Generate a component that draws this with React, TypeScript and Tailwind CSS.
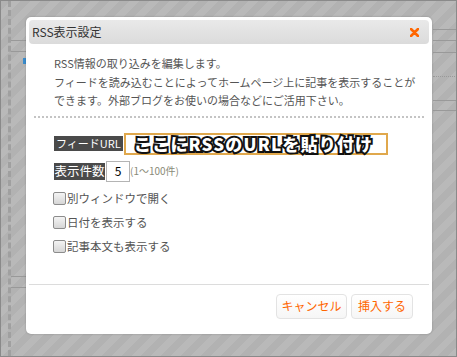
import React from 'react'

function CheckRow({ label }: { label: string }) {
  return (
    <div className="flex h-[24px] items-center">
      <span className="h-[13px] w-[13px] rounded-[2px] border border-[#8c8c8c] bg-gradient-to-b from-[#f4f4f4] to-[#d6d6d6]" />
      <span className="ml-[1px] text-[11.5px] leading-none text-[#555]">{label}</span>
    </div>
  )
}

export default function App() {
  return (
    <div className="relative h-[357px] w-[457px] overflow-hidden border border-[#8a8a8a] bg-[repeating-linear-gradient(135deg,#b2b2b2_0px,#b2b2b2_7px,#b9b9b9_7px,#b9b9b9_14px)] font-['Noto_Sans_CJK_JP','Noto_Sans',sans-serif]">
      {/* page behind the overlay */}
      <div className="absolute left-[7px] top-0 h-full border-l-[3px] border-dashed border-[#a0a0a0]" />
      <div className="absolute left-[10px] top-[39px] h-px w-[16px] bg-[#999]" />
      <div className="absolute left-[10px] top-[50px] h-px w-[16px] bg-[#999]" />
      <div className="absolute left-[22px] top-[57px] h-[6px] w-[3px] bg-[#3a8ccc]" />
      <div className="absolute left-[10px] top-[275px] h-px w-[16px] bg-[#999]" />
      <div className="absolute left-[10px] top-[286px] h-px w-[16px] bg-[#999]" />
      <div className="absolute left-[432px] top-[28px] h-px w-[24px] bg-[#999]" />
      <div className="absolute left-[432px] top-[39px] h-px w-[24px] bg-[#999]" />
      <div className="absolute left-[432px] top-[51px] h-px w-[24px] bg-[#999]" />
      <div className="absolute left-[432px] top-[75px] w-[24px] border-t border-dotted border-[#999]" />
      <div className="absolute left-[432px] top-[99px] h-px w-[24px] bg-[#999]" />
      <div className="absolute left-[432px] top-[109px] h-px w-[24px] bg-[#999]" />

      {/* dialog */}
      <div className="absolute left-[25px] top-[16px] flex h-[317px] w-[406px] flex-col rounded-[5px] bg-white p-[3px] shadow-[0_0_2px_rgba(0,0,0,0.25)]">
        <div className="flex h-[24px] items-center justify-between rounded-[4px] bg-gradient-to-b from-[#e9e9e9] to-[#dbdbdb] pl-[3px] pr-[10px]">
          <span className="text-[12px] leading-none text-[#333]">RSS表示設定</span>
          <svg width="9" height="9" viewBox="0 0 9 9">
            <path d="M1 1 L8 8 M8 1 L1 8" stroke="#ff6600" strokeWidth="2.6" strokeLinecap="round" />
          </svg>
        </div>

        <div className="mt-[10px] pl-[25px] text-[11px] leading-[18.5px] text-[#555]">
          RSS情報の取り込みを編集します。
          <br />
          フィードを読み込むことによってホームページ上に記事を表示することが
          <br />
          できます。外部ブログをお使いの場合などにご活用下さい。
        </div>

        <div className="mx-[5px] mt-[6px] border-t-2 border-dotted border-[#c4c4c4]" />

        <div className="mt-[15px] flex items-center pl-[25px]">
          <span className="flex h-[15px] w-[69px] items-center bg-[#4a4a4a] pl-[2px] text-[11px] leading-none text-white">
            フィードURL
          </span>
          <div className="ml-[1px] flex h-[22px] w-[264px] items-center border-2 border-[#e0a84c] bg-white pl-[8px]">
            <span className="text-[17px] font-black leading-none tracking-[1.2px] text-white [-webkit-text-stroke:4px_#111] [paint-order:stroke_fill]">
              ここにRSSのURLを貼り付け
            </span>
          </div>
        </div>

        <div className="mt-[6px] flex items-center pl-[25px]">
          <span className="flex h-[17px] w-[51px] items-center justify-center bg-[#4a4a4a] text-[12.5px] leading-none text-white">
            表示件数
          </span>
          <span className="ml-[1px] flex h-[21px] w-[24px] items-center justify-center border border-[#b4b4b4] bg-white text-[12px] text-black">
            5
          </span>
          <span className="text-[10px] leading-none text-[#8a8a78]">(1〜100件)</span>
        </div>

        <div className="mt-[5px] flex flex-col pl-[24px]">
          <CheckRow label="別ウィンドウで開く" />
          <CheckRow label="日付を表示する" />
          <CheckRow label="記事本文も表示する" />
        </div>

        <div className="mt-[25px] h-px bg-[#dcdcdc]" />

        <div className="mt-[9px] flex justify-end gap-[4px] pr-[16px]">
          <button className="h-[25px] w-[71px] rounded-[4px] border border-[#e3e3e3] bg-gradient-to-b from-white to-[#f6f6f6] text-[12px] leading-none text-[#ff6600]">
            キャンセル
          </button>
          <button className="h-[25px] w-[62px] rounded-[4px] border border-[#e3e3e3] bg-gradient-to-b from-white to-[#f6f6f6] text-[12px] leading-none text-[#ff6600]">
            挿入する
          </button>
        </div>
      </div>
    </div>
  )
}
